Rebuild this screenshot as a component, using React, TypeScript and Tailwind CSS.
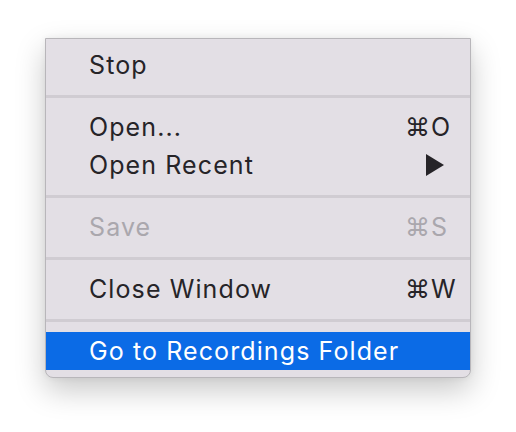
import React from "react";

const Sep = () => <div className="mt-[11px] mb-[10px] h-[3px] bg-[#d0ccd2]" />;

function Item({
  label,
  shortcut,
  disabled,
  active,
  submenu,
}: {
  label: string;
  shortcut?: string;
  disabled?: boolean;
  active?: boolean;
  submenu?: boolean;
}) {
  const color = active ? "text-white" : disabled ? "text-[#aaa7ad]" : "text-[#262428]";
  return (
    <div className={`flex h-[38px] items-center pl-[43px] ${active ? "bg-[#0b6be6]" : ""} ${color}`}>
      <span className="flex-1">{label}</span>
      {shortcut && <span className="w-[65px]">{shortcut}</span>}
      {submenu && (
        <span className="flex w-[65px] pl-[21px]">
          <svg width="18" height="22" viewBox="0 0 18 22">
            <path d="M0 0 L18 11 L0 22 Z" fill="#262428" />
          </svg>
        </span>
      )}
    </div>
  );
}

export default function App() {
  return (
    <div className="h-[432px] w-[516px] bg-white pl-[45px] pt-[38px]">
      <div
        className="w-[426px] rounded-b-[8px] border border-[#b8b6ba] bg-[#e3dfe5] py-[7px] text-[25px] leading-none tracking-[1.1px] shadow-[0_12px_30px_rgba(0,0,0,0.22),0_0_6px_rgba(0,0,0,0.06)]"
        style={{ fontFamily: "Inter, 'Noto Sans', sans-serif" }}
      >
        <Item label="Stop" />
        <Sep />
        <Item label="Open..." shortcut="⌘O" />
        <Item label="Open Recent" submenu />
        <Sep />
        <Item label="Save" shortcut="⌘S" disabled />
        <Sep />
        <Item label="Close Window" shortcut="⌘W" />
        <Sep />
        <Item label="Go to Recordings Folder" active />
      </div>
    </div>
  );
}
